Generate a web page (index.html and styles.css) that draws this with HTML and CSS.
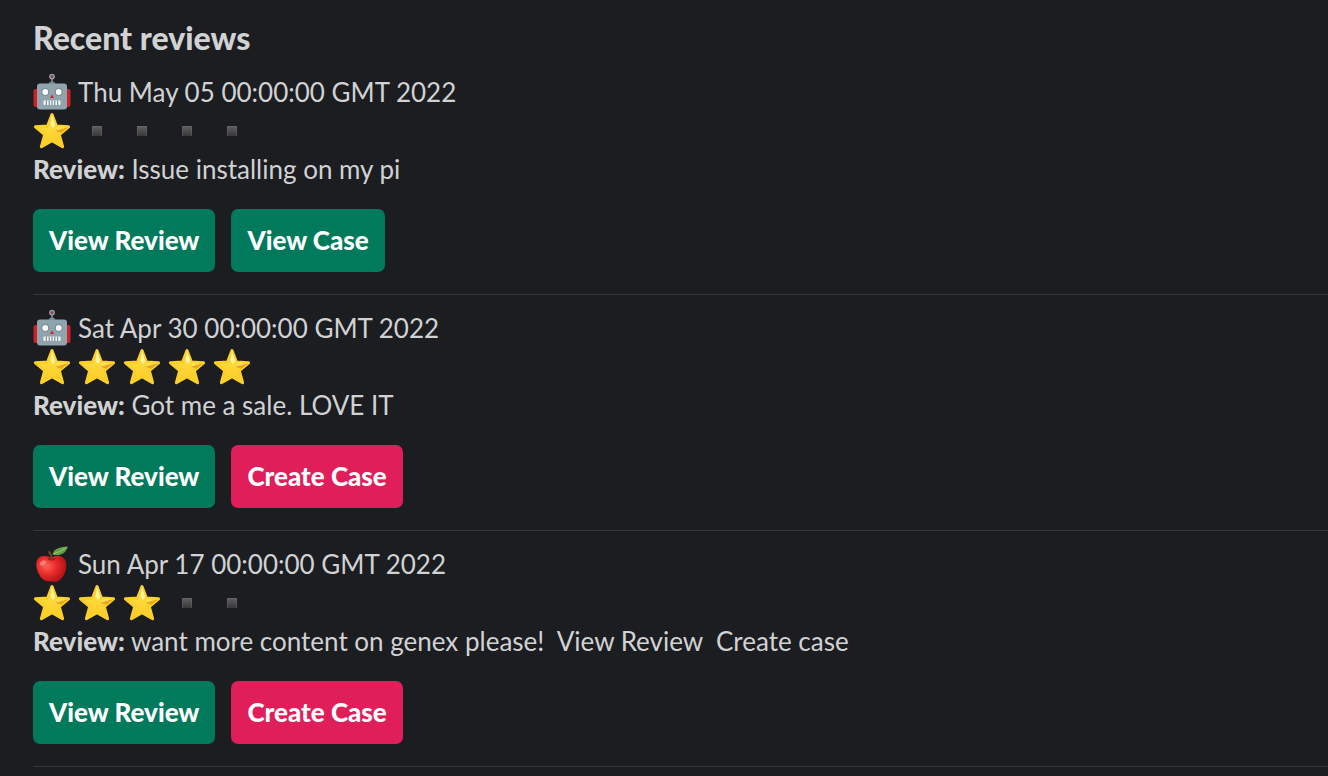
FILE: index.html
```html
<!DOCTYPE html>
<html lang="en">
<head>
<meta charset="utf-8">
<meta name="viewport" content="width=device-width, initial-scale=1">
<title>Recent reviews</title>
<link rel="stylesheet" href="styles.css">
</head>
<body>
<svg class="defs" aria-hidden="true">
  <defs>
    <linearGradient id="starFill" x1="0" y1="0" x2="0" y2="1"><stop offset="0" stop-color="#ffe14a"/><stop offset="1" stop-color="#fdcb25"/></linearGradient>
    <linearGradient id="squareFill" x1="0" y1="0" x2="0" y2="1"><stop offset="0" stop-color="#606060"/><stop offset="1" stop-color="#383838"/></linearGradient>
    <radialGradient id="appleFill" cx=".35" cy=".4" r=".7"><stop offset="0" stop-color="#ff6258"/><stop offset=".45" stop-color="#e92c2b"/><stop offset="1" stop-color="#a80f14"/></radialGradient>
    <symbol id="star" viewBox="0 0 38 38">
      <path d="M19 2.6 23.4 14 35.6 14.8 26.3 22.6 29.6 34.7 19 28.6 8.4 34.7 11.7 22.6 2.4 14.8 14.6 14Z" fill="url(#starFill)" stroke="#fbd02c" stroke-width="3" stroke-linejoin="round"/>
      <path d="M19 2.5 22.3 13.5 20 16 17.5 12.5Z" fill="#fff6a0"/>
      <path d="M35.5 15 28.5 20.8 22.5 18.8Z" fill="#e9a51d"/>
      <path d="M23.3 14.2 35.5 15 24 18Z" fill="#ffdf55"/>
    </symbol>
    <symbol id="square" viewBox="0 0 38 38">
      <rect x="14" y="14" width="10" height="10" fill="url(#squareFill)"/>
      <path d="M14.5 24V14.5H23.5V24" fill="none" stroke="#707070" stroke-opacity=".4"/>
    </symbol>
    <symbol id="robot" viewBox="0 0 38 38">
      <rect x="0.5" y="16" width="6" height="18" rx="2" fill="#c92228"/>
      <rect x="31.5" y="16" width="6" height="18" rx="2" fill="#c92228"/>
      <path d="M19 5V12" stroke="#78909c" stroke-width="1.6"/>
      <circle cx="19" cy="3.6" r="2.2" fill="#a62b40" stroke="#8f9da5" stroke-width="1.5"/>
      <rect x="4" y="10.5" width="30" height="26" rx="3" fill="#90a4ae"/>
      <path d="M15.5 11Q16 8.5 19 8.5T22.5 11Z" fill="#78909c"/>
      <circle cx="12.3" cy="19" r="3.6" fill="#fff" stroke="#687f8b"/>
      <circle cx="25.7" cy="19" r="3.6" fill="#fff" stroke="#687f8b"/>
      <path d="M19 21.5 21 25H17Z" fill="#c62828"/>
      <rect x="10.5" y="27.5" width="17" height="4.5" rx="1" fill="#f4f7f8"/>
      <path d="M13.3 27.5V32M16.2 27.5V32M19 27.5V32M21.8 27.5V32M24.7 27.5V32" stroke="#61747e"/>
    </symbol>
    <symbol id="apple" viewBox="0 0 38 38">
      <path d="M18.5 13C23 9 31 10 33 17 35 27 28 37 22 37 19 37 18 36 16 36.5 8 37 2 24 3.5 17 5 10 13 9.5 18.5 13Z" fill="url(#appleFill)"/>
      <path d="M14 13.5Q18.5 12 23 13.5Q20.5 16 18.5 15.5 16 16 14 13.5Z" fill="#9c1a18"/>
      <path d="M18.7 14.5Q18.5 9.5 16 7" fill="none" stroke="#70442b" stroke-width="2" stroke-linecap="round"/>
      <path d="M19.5 9.5C20.5 3.5 27 2 34.8 1.5 33.5 8 27 12 19.5 9.5Z" fill="#5fa149"/>
      <path d="M20.5 9Q26 7.5 33.5 2.3" fill="none" stroke="#98c77c" stroke-width="1"/>
      <ellipse cx="10" cy="18" rx="3.5" ry="2.2" fill="#ff9a8f" opacity=".65" transform="rotate(-30 10 18)"/>
    </symbol>
  </defs>
</svg>
<main class="reviews">
  <h1 class="title">Recent reviews</h1>

  <article class="review">
    <p class="line date"><svg class="emoji" role="img" aria-label="Android"><use href="#robot"/></svg>Thu May 05 00:00:00 GMT 2022</p>
    <div class="line rating" role="img" aria-label="1 out of 5 stars">
      <svg class="emoji"><use href="#star"/></svg><svg class="emoji"><use href="#square"/></svg><svg class="emoji"><use href="#square"/></svg><svg class="emoji"><use href="#square"/></svg><svg class="emoji"><use href="#square"/></svg>
    </div>
    <p class="line text"><strong>Review:</strong> Issue installing on my pi</p>
    <div class="actions"><button type="button" class="button primary">View Review</button><button type="button" class="button primary">View Case</button></div>
  </article>

  <article class="review">
    <p class="line date"><svg class="emoji" role="img" aria-label="Android"><use href="#robot"/></svg>Sat Apr 30 00:00:00 GMT 2022</p>
    <div class="line rating" role="img" aria-label="5 out of 5 stars">
      <svg class="emoji"><use href="#star"/></svg><svg class="emoji"><use href="#star"/></svg><svg class="emoji"><use href="#star"/></svg><svg class="emoji"><use href="#star"/></svg><svg class="emoji"><use href="#star"/></svg>
    </div>
    <p class="line text"><strong>Review:</strong> Got me a sale. LOVE IT</p>
    <div class="actions"><button type="button" class="button primary">View Review</button><button type="button" class="button danger">Create Case</button></div>
  </article>

  <article class="review">
    <p class="line date"><svg class="emoji" role="img" aria-label="Apple"><use href="#apple"/></svg>Sun Apr 17 00:00:00 GMT 2022</p>
    <div class="line rating" role="img" aria-label="3 out of 5 stars">
      <svg class="emoji"><use href="#star"/></svg><svg class="emoji"><use href="#star"/></svg><svg class="emoji"><use href="#star"/></svg><svg class="emoji"><use href="#square"/></svg><svg class="emoji"><use href="#square"/></svg>
    </div>
    <p class="line text"><strong>Review:</strong> want more content on genex please!&nbsp; View Review&nbsp; Create case</p>
    <div class="actions"><button type="button" class="button primary">View Review</button><button type="button" class="button danger">Create Case</button></div>
  </article>
</main>
</body>
</html>
```

FILE: styles.css
```css
* {
  box-sizing: border-box;
}

body {
  margin: 0;
  background: #1c1d21;
  color: #d1d2d3;
  font: 26px/38px Lato, sans-serif;
}

.defs {
  position: absolute;
  width: 0;
  height: 0;
}

.reviews {
  padding: 16px 0 0 33px;
}

.title {
  margin: 0;
  font-size: 32px;
  line-height: 43px;
  font-weight: 900;
}

.review {
  padding: 14px 0 22px;
  border-bottom: 1px solid #35373b;
}

.line {
  display: flex;
  align-items: center;
  gap: 7px;
  min-height: 38px;
  margin: 0;
}

.date {
  margin-bottom: 1px;
}

.text {
  display: block;
}

.text strong {
  font-weight: 900;
}

.emoji {
  flex: none;
  width: 38px;
  height: 38px;
}

.actions {
  display: flex;
  flex-wrap: wrap;
  gap: 16px;
  margin-top: 21px;
}

.button {
  padding: 12px 16px;
  border: 0;
  border-radius: 7px;
  color: #fff;
  font: 900 26px/39px Lato, sans-serif;
  cursor: pointer;
}

.primary {
  background: #007a5a;
}

.danger {
  background: #e01e5a;
}
```
